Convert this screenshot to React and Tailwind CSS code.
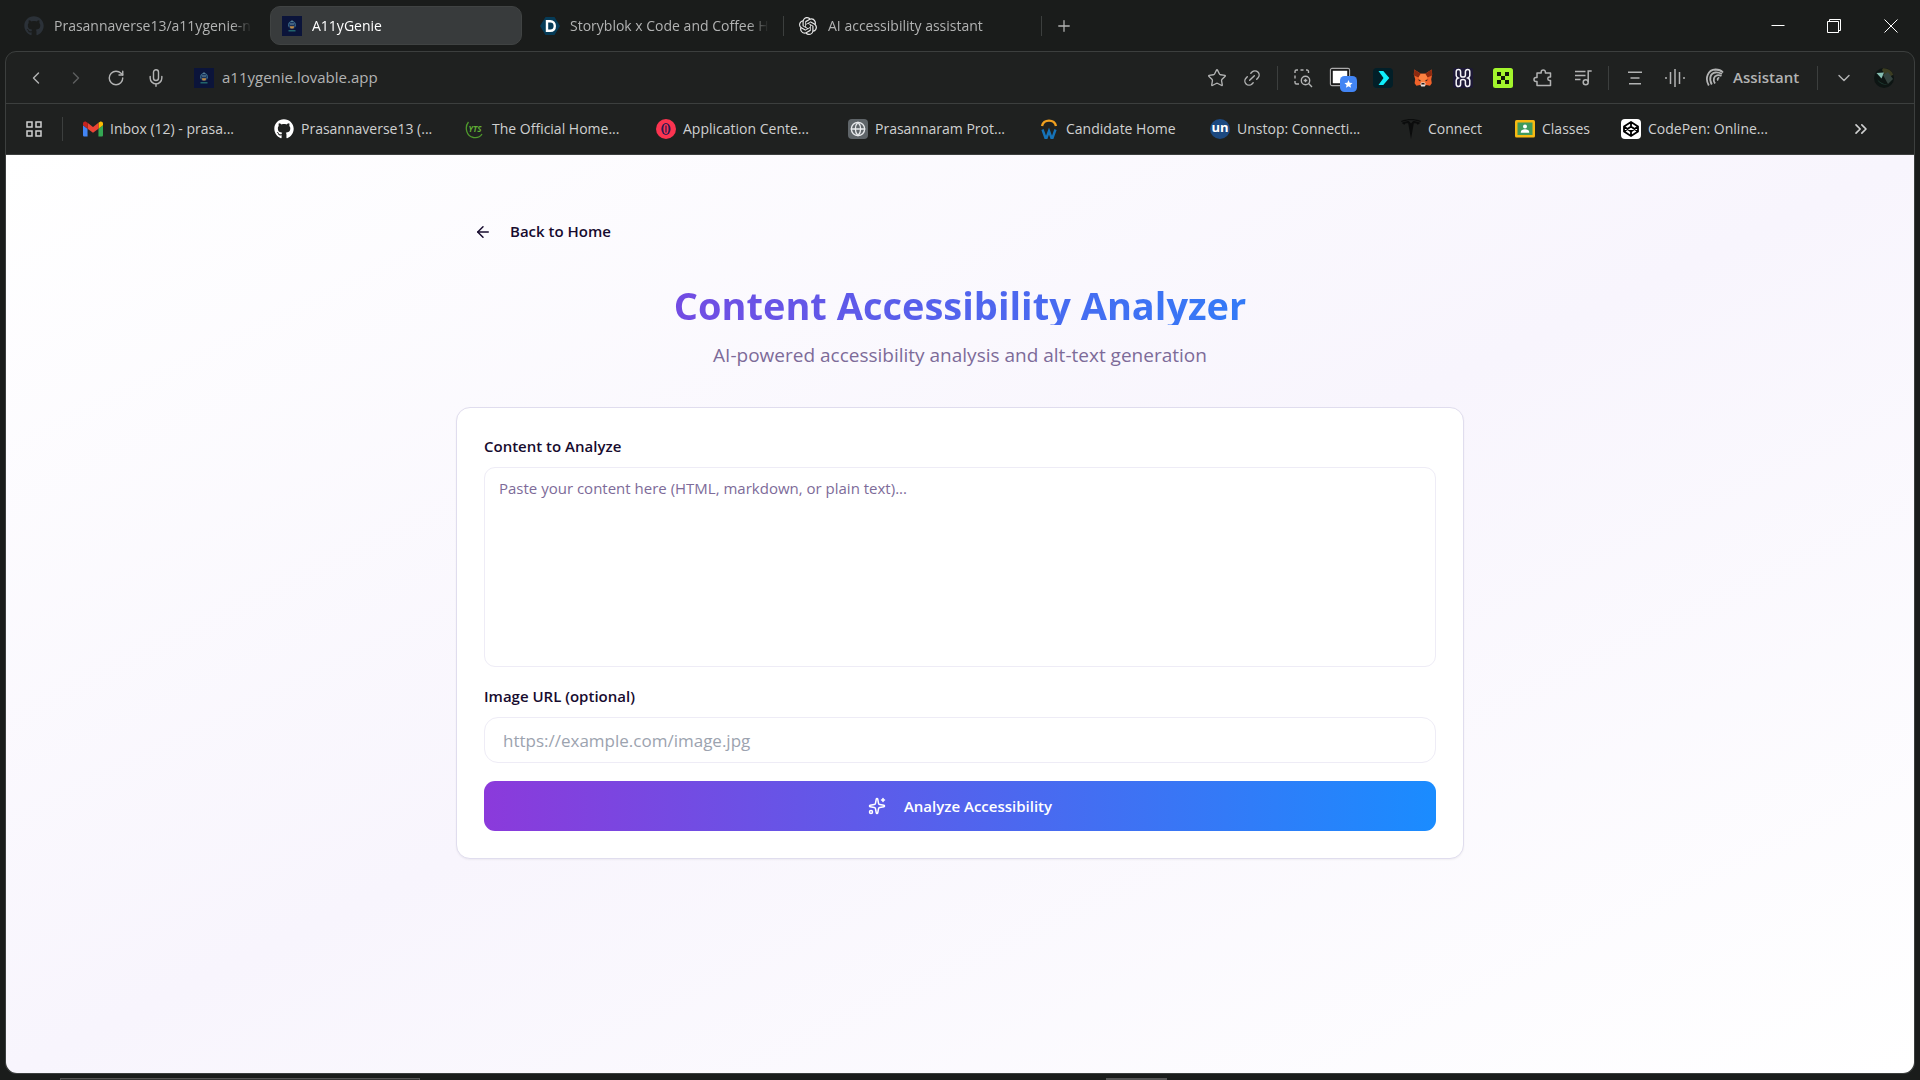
import React from 'react'
import { ArrowLeft, ChevronDown, ChevronLeft, ChevronRight, ChevronsRight, Globe, Link2, Mic, Plus, RotateCw, Sparkles, Star } from 'lucide-react'
import { FaGithub } from 'react-icons/fa'
import { SiCodepen, SiOpenai, SiTesla } from 'react-icons/si'

/* ---------- favicons ---------- */

const GenieIcon = () => (
    <svg viewBox="0 0 20 20" className="size-5">
        <rect width="20" height="20" fill="#0b143a" />
        <circle cx="10" cy="9" r="4" fill="#16305c" />
        <path d="M6.8 10.500c-.7-3 1-5.200 3.200-5.200s3.900 2.200 3.200 5.200" fill="none" stroke="#41738f" strokeWidth="1" />
        <path d="M8 8h4M10 4.300v1.600" stroke="#6b8ea0" strokeWidth="1" />
        <path d="M7.600 10.300h4.800l-1 2.100H8.600z" fill="#c08b45" />
        <path d="M6.500 14.800h7" stroke="#27797a" strokeWidth="1.200" />
    </svg>
)

const StoryIcon = () => (
    <svg viewBox="0 0 20 20" className="size-5">
        <path d="M5.500 1h9L20 10l-5.500 9h-9L0 10z" fill="#063b57" />
        <path d="M7 5.200h3.200c3 0 4.600 1.900 4.600 4.800s-1.600 4.800-4.600 4.800H7z" fill="none" stroke="#fff" strokeWidth="2.400" />
    </svg>
)

const GmailIcon = () => (
    <svg viewBox="52 42 88 66" className="w-5 h-4">
        <path fill="#4285f4" d="M58 108h14V74L52 59v43c0 3.320 2.690 6 6 6" />
        <path fill="#34a853" d="M120 108h14c3.320 0 6-2.690 6-6V59l-20 15" />
        <path fill="#fbbc04" d="M120 48v26l20-15v-8c0-7.420-8.470-11.650-14.400-7.200" />
        <path fill="#ea4335" d="M72 74V48l24 18 24-18v26L96 92" />
        <path fill="#c5221f" d="M52 51v8l20 15V48l-5.600-4.200c-5.940-4.450-14.400-.220-14.400 7.200" />
    </svg>
)

const YtsIcon = () => (
    <span className="relative flex size-5 items-center justify-center">
        <svg viewBox="0 0 20 20" className="absolute inset-0 size-5" fill="none" stroke="#4f9a2c">
            <path d="M3.500 3C-.5 8 1 17 8.500 18.500c4 .6 7-1 8.500-3.500" strokeWidth="1.300" />
        </svg>
        <span className="text-[8px] leading-none font-bold italic text-[#5fae35]">YTS</span>
    </span>
)

const OperaIcon = () => (
    <svg viewBox="0 0 20 20" className="size-5">
        <circle cx="10" cy="10" r="10" fill="#fb3450" />
        <ellipse cx="10" cy="10" rx="4.600" ry="6" fill="#2b1a52" />
        <ellipse cx="10" cy="10" rx="2.600" ry="5" fill="#fb3450" />
        <path d="M10 6.500v7" stroke="#2b1a52" strokeWidth="1.200" />
    </svg>
)

const SiteIcon = () => (
    <span className="flex size-5 items-center justify-center rounded bg-[#5f6569]">
        <Globe className="size-4 text-[#e8eaec]" strokeWidth={2} />
    </span>
)

const CandidateIcon = () => (
    <svg viewBox="0 0 20 20" className="size-5" fill="none">
        <path d="M3 7C4 3 7 1.600 10 1.600S16 3 17 7" stroke="#f0a01f" strokeWidth="2.400" />
        <path d="M3.500 10.500L6.500 19h1L10 12l2.500 7h1l3-8.500" stroke="#1673b8" strokeWidth="2.400" />
    </svg>
)

const UnstopIcon = () => (
    <span className="flex size-5 items-center justify-center rounded-full bg-[#1c4980] pb-1 text-[13px] leading-none font-bold text-white">un</span>
)

const ClassesIcon = () => (
    <svg viewBox="0 0 20 20" className="size-5">
        <rect y="1" width="20" height="17.500" rx="1.500" fill="#f6b912" />
        <rect x="2.500" y="3.500" width="15" height="12.500" fill="#3f9a5c" />
        <circle cx="10" cy="7.500" r="2" fill="#fff" />
        <path d="M5.800 13c0-2 2-2.800 4.200-2.800s4.200.8 4.200 2.800v.8H5.800z" fill="#fff" />
    </svg>
)

const CodepenIcon = () => (
    <span className="flex size-5 items-center justify-center rounded-sm bg-white">
        <svg viewBox="0 0 20 20" className="size-5" fill="none" stroke="#000" strokeWidth="1.800" strokeLinejoin="round">
            <path d="M10 3l7 4.500v5L10 17l-7-4.500v-5zM10 3v4.500M10 12.500V17M3 7.500l7 5 7-5M3 12.500l7-5 7 5" />
        </svg>
    </span>
)

/* ---------- extension icons ---------- */

const LensIcon = () => (
    <svg viewBox="0 0 20 20" className="size-5" fill="none" stroke="currentColor" strokeWidth="1.400">
        <path d="M2 5V3.500A1.500 1.500 0 0 1 3.500 2H5M7.500 2h3M13 2h1a1.500 1.500 0 0 1 1.500 1.500V5M2 7.500v3M2 13v1.500A1.500 1.500 0 0 0 3.500 16H6" />
        <circle cx="12.500" cy="12.500" r="4.200" />
        <path d="M15.600 15.600L19 19M10.700 12.500h3.600M12.500 10.700v3.600" />
    </svg>
)

const ScreenIcon = () => (
    <svg viewBox="0 0 28 28" className="size-7">
        <rect x="1.500" y="4.500" width="19" height="17" rx="1.500" fill="none" stroke="#aaa" strokeWidth="1.300" />
        <rect x="3" y="6" width="16" height="14" fill="#fff" stroke="#111" strokeWidth="1.500" />
        <rect x="11" y="12" width="17" height="16" rx="4.500" fill="#4285f4" />
        <path d="M19.500 16l1.200 2.700 2.900.3-2.200 1.900.7 2.900-2.600-1.500-2.600 1.500.7-2.900-2.200-1.900 2.900-.3z" fill="#fff" />
    </svg>
)

const ArrowExtIcon = () => (
    <svg viewBox="0 0 20 20" className="size-5">
        <rect width="20" height="20" rx="4" fill="#021f28" />
        <path d="M5.500 3h4.800l6 7-6 7H5.500l5-7z" fill="#0ff0fc" />
    </svg>
)

const FoxIcon = () => (
    <svg viewBox="0 0 20 20" className="size-5">
        <path d="M1.200 1.500l6.600 4.300h4.400l6.600-4.300.4 5-1 4.700.6 4-1.800 2.600-3.600-.8-1.500 1H8.500L7 17l-3.600.8-1.800-2.600.6-4-1.400-4.700z" fill="#f0622a" />
        <path d="M1.200 1.500l6.600 4.300-2.300 3.600L1 7.500zM18.800 1.500l-6.600 4.300 2.300 3.600L19 7.500z" fill="#8c2a10" />
        <path d="M5.500 9.400l2.300-3.600h4.400l2.300 3.600-2.500 5.600H8z" fill="#fb8140" />
        <path d="M4.600 11.500l3 .4-.4 1.600zM15.400 11.500l-3 .4.400 1.600z" fill="#33201a" />
        <path d="M7.400 15.600l1-1h3.200l1 1-.8 3H8.200z" fill="#e6e2e0" />
        <path d="M8.600 15h2.800l.3 1.400H8.300z" fill="#2a1c18" />
    </svg>
)

const KnotIcon = () => (
    <svg viewBox="0 0 20 20" className="size-5">
        <rect width="20" height="20" rx="2" fill="#1d1936" />
        <path d="M3.200 3.700a2.200 2.200 0 0 1 4.400 0v3.500c0 1.200.8 1.800 2.400 1.800s2.400-.6 2.400-1.800V3.700a2.200 2.200 0 0 1 4.400 0v3.800c0 1.300-.9 2-2 2.500 1.100.5 2 1.200 2 2.500v3.800a2.200 2.200 0 0 1-4.400 0v-3c0-1.200-.8-1.800-2.400-1.800s-2.400.6-2.400 1.800v3a2.200 2.200 0 0 1-4.400 0v-3.800c0-1.300.9-2 2-2.500-1.100-.5-2-1.200-2-2.500z" fill="none" stroke="#f5f5f7" strokeWidth="1.500" />
    </svg>
)

const DiceIcon = () => (
    <svg viewBox="0 0 20 20" className="size-5">
        <rect width="20" height="20" rx="2.500" fill="#a3f52c" />
        <path d="M4 4h4v4H4zM12 4h4v4h-4zM8 8h4v4H8zM4 12h4v4H4zM12 12h4v4h-4z" fill="#10180a" />
    </svg>
)

const PuzzleIcon = () => (
    <svg viewBox="0 0 20 20" className="size-5" fill="none" stroke="currentColor" strokeWidth="1.500" strokeLinejoin="round">
        <path d="M4 5h4.200V4a2.100 2.100 0 0 1 4.200 0v1h5.100v4h-1a1.700 1.700 0 0 0 0 3.400h1V17.500H4v-4H3a2 2 0 0 1 0-4h1z" />
    </svg>
)

const MusicIcon = () => (
    <svg viewBox="0 0 20 20" className="size-5" fill="none" stroke="currentColor" strokeWidth="1.500">
        <path d="M2 3.500h10.500M2 7.500h10.500M2 11.500h5.500M15.200 14V3h3.500" />
        <circle cx="12.700" cy="14.200" r="2.500" />
    </svg>
)

const LinesIcon = () => (
    <svg viewBox="0 0 20 20" className="size-5" fill="none" stroke="currentColor" strokeWidth="1.600">
        <path d="M3 4.200h14M5.500 10h9M4 15.800h12" />
    </svg>
)

const WaveIcon = () => (
    <svg viewBox="0 0 20 20" className="size-5" fill="none" stroke="currentColor" strokeWidth="1.500">
        <path d="M1 9v2M5.500 4v12M10 1v18M14.500 4v12M19 9v2" />
    </svg>
)

const AssistantIcon = () => (
    <svg viewBox="0 0 20 20" className="size-5" fill="none" stroke="currentColor" strokeWidth="1.800">
        <path d="M3.800 17.500C-.5 10 3 1.800 10.500 1.500c3 0 5.500.8 7.500 3" />
        <path d="M6.800 16.500C3.500 11 5.500 5 10.500 4.500c2.500-.2 4.500.5 6.500 1.500" />
        <path d="M10 15.500c-2.500-4-1-7.500 2-8.200 1.500-.3 3-.1 4.500.7" />
        <path d="M13 12.500c-.8-1.300-.3-2.500 1.300-3" />
    </svg>
)

const AvatarIcon = () => (
    <svg viewBox="0 0 20 20" className="size-5">
        <circle cx="10" cy="10" r="10" fill="#0d1513" />
        <path d="M9 .2a10 10 0 0 1 10.300 6.500L13 10 8 2z" fill="#3c3d22" />
        <path d="M9 7l5-3 5 7-5 5z" fill="#34433f" />
        <path d="M3 11c3 4 8 6 12 5a9 9 0 0 1-12-5z" fill="#1e3a31" />
        <path d="M2.500 5l7.500-.5-2.500 6z" fill="#86bdb0" />
    </svg>
)

const GridIcon = () => (
    <svg viewBox="0 0 16 16" className="size-4" fill="none" stroke="currentColor" strokeWidth="1.500">
        <path d="M1 1h5v5H1zM10 1h5v5h-5zM1 10h5v5H1zM10 10h5v5h-5z" />
    </svg>
)

/* ---------- data ---------- */

const tabs = [
    { title: 'Prasannaverse13/a11ygenie-n', icon: <FaGithub className="size-5 text-[#2b3138]" /> },
    { title: 'A11yGenie', icon: <GenieIcon />, active: true },
    { title: 'Storyblok x Code and Coffee H', icon: <StoryIcon />, divider: true },
    { title: 'AI accessibility assistant', icon: <SiOpenai className="size-[18px] text-[#e6e6e6]" />, divider: true },
]

const bookmarks = [
    { name: 'Inbox (12) - prasa...', icon: <GmailIcon />, width: 'w-[191px]' },
    { name: 'Prasannaverse13 (...', icon: <FaGithub className="size-5 text-white" />, width: 'w-[191px]' },
    { name: 'The Official Home...', icon: <YtsIcon />, width: 'w-[191px]' },
    { name: 'Application Cente...', icon: <OperaIcon />, width: 'w-[192px]' },
    { name: 'Prasannaram Prot...', icon: <SiteIcon />, width: 'w-[191px]' },
    { name: 'Candidate Home', icon: <CandidateIcon />, width: 'w-[171px]' },
    { name: 'Unstop: Connecti...', icon: <UnstopIcon />, width: 'w-[191px]' },
    { name: 'Connect', icon: <SiTesla className="size-5 text-[#0b0c0c]" />, width: 'w-[114px]' },
    { name: 'Classes', icon: <ClassesIcon />, width: 'w-[106px]' },
    { name: 'CodePen: Online...', icon: <CodepenIcon />, width: 'w-[191px]' },
]

const extensions = [
    { name: 'Search image', icon: <LensIcon /> },
    { name: 'Screen capture', icon: <ScreenIcon /> },
    { name: 'Arrow', icon: <ArrowExtIcon /> },
    { name: 'Wallet', icon: <FoxIcon /> },
    { name: 'Knot', icon: <KnotIcon /> },
    { name: 'Dice', icon: <DiceIcon /> },
    { name: 'Extensions', icon: <PuzzleIcon /> },
    { name: 'Media', icon: <MusicIcon /> },
]

/* ---------- browser chrome ---------- */

const IconButton = ({ label, children }) => (
    <button type="button" aria-label={label} className="flex size-10 shrink-0 items-center justify-center">
        {children}
    </button>
)

const Divider = () => <span className="h-6 w-px shrink-0 bg-[#3c3f3e]"></span>

const TabStrip = () => (
    <div className="flex h-[51px] items-center justify-between pl-3 text-sm">
        <div className="flex items-center">
            {tabs.map((tab) => (
                <div key={tab.title} className="flex items-center">
                    <button
                        type="button"
                        className={tab.active
                            ? 'flex h-[39px] w-[252px] items-center gap-[10px] rounded-[10px] border border-[#404343] bg-[#383b3c] px-[11px] text-white'
                            : 'flex h-[39px] w-[252px] items-center gap-[10px] px-3 text-[#b2b3b3]'}
                    >
                        <span className="flex size-5 shrink-0 items-center justify-center">{tab.icon}</span>
                        <span className="flex-1 whitespace-nowrap text-left mask-r-from-90%">{tab.title}</span>
                    </button>
                    <span className="flex w-[6px] justify-center">{tab.divider && <span className="h-5 w-px bg-[#3c3f3e]"></span>}</span>
                </div>
            ))}
            <IconButton label="New tab"><Plus className="size-[18px] text-[#b2b3b3]" strokeWidth={1.7} /></IconButton>
        </div>
        <div className="flex items-center text-white">
            <button type="button" aria-label="Minimize" className="flex h-[51px] w-14 items-center justify-center">
                <svg viewBox="0 0 14 14" className="size-[14px]" fill="none" stroke="currentColor"><path d="M.5 6.500h13" /></svg>
            </button>
            <button type="button" aria-label="Restore" className="flex h-[51px] w-14 items-center justify-center">
                <svg viewBox="0 0 14 14" className="size-[14px]" fill="none" stroke="currentColor"><path d="M.5 2.500h11v11H.5zM2.500 2.500v-2h11v11h-2" /></svg>
            </button>
            <button type="button" aria-label="Close" className="flex h-[51px] w-[58px] items-center justify-center">
                <svg viewBox="0 0 14 14" className="size-[14px]" fill="none" stroke="currentColor"><path d="M.5.5l13 13M13.500.5l-13 13" /></svg>
            </button>
        </div>
    </div>
)

const AddressBar = () => (
    <div className="flex h-[52px] items-center justify-between border-b border-[#3c3f3e] pl-[10px] pr-[10px] text-[#b2b3b3]">
        <div className="flex items-center">
            <IconButton label="Back"><ChevronLeft className="size-5" strokeWidth={1.7} /></IconButton>
            <IconButton label="Forward"><ChevronRight className="size-5 text-[#5c5e5e]" strokeWidth={1.7} /></IconButton>
            <IconButton label="Reload"><RotateCw className="size-[18px]" strokeWidth={1.9} /></IconButton>
            <IconButton label="Voice"><Mic className="size-5" strokeWidth={1.7} /></IconButton>
            <div className="flex items-center gap-2 pl-[18px]">
                <GenieIcon />
                <span>a11ygenie.lovable.app</span>
            </div>
        </div>
        <div className="flex items-center">
            <div className="flex w-[70px] items-center justify-around">
                <button type="button" aria-label="Bookmark"><Star className="size-5" strokeWidth={1.600} /></button>
                <button type="button" aria-label="Copy link"><Link2 className="size-5 -rotate-45" strokeWidth={1.700} /></button>
            </div>
            <span className="pl-2"></span>
            <Divider />
            <span className="pl-[5px]"></span>
            {extensions.map((ext) => <IconButton key={ext.name} label={ext.name}>{ext.icon}</IconButton>)}
            <span className="pl-[5px]"></span>
            <Divider />
            <span className="pl-[6px]"></span>
            <IconButton label="Reader"><LinesIcon /></IconButton>
            <IconButton label="Listen"><WaveIcon /></IconButton>
            <button type="button" className="flex h-10 w-[122px] items-center gap-2 pl-[10px] font-semibold">
                <AssistantIcon />
                Assistant
            </button>
            <Divider />
            <span className="pl-[6px]"></span>
            <IconButton label="More"><ChevronDown className="size-5" strokeWidth={1.700} /></IconButton>
            <IconButton label="Profile"><AvatarIcon /></IconButton>
        </div>
    </div>
)

const BookmarksBar = () => (
    <nav className="flex h-[51px] items-center justify-between border-b border-[#3c3f3e] pl-5 pr-[33px] text-sm text-[#cfd0d0]">
        <div className="flex items-center">
            <button type="button" aria-label="All bookmarks" className="mr-5"><GridIcon /></button>
            <Divider />
            <span className="pl-5"></span>
            {bookmarks.map(({ name, icon, width }) => (
                <a key={name} href="#" className={`${width} flex items-center gap-[7px] whitespace-nowrap`}>
                    {icon}
                    <span>{name}</span>
                </a>
            ))}
        </div>
        <button type="button" aria-label="More bookmarks" className="flex w-10 justify-center"><ChevronsRight className="size-5" strokeWidth={2} /></button>
    </nav>
)

/* ---------- page ---------- */

const Analyzer = () => (
    <main className="flex-1 rounded-b-[11px] bg-linear-to-br/srgb from-white via-[#f8f5fd] to-white px-9 py-[54px] text-[#170b2e]">
        <div className="mx-auto max-w-[1008px]">
            <a href="#" className="inline-flex h-[45px] items-center gap-[18px] px-[18px] font-semibold">
                <ArrowLeft className="size-[18px]" />
                Back to Home
            </a>

            <div className="mt-[26px] mb-9 text-center">
                <h1 className="mb-[14px] h-[45px] bg-linear-to-r/srgb from-[#8b3adb] to-[#1a8cff] bg-clip-text pt-[3px] text-[38px] leading-[45px] font-bold text-transparent">
                    Content Accessibility Analyzer
                </h1>
                <p className="text-[19px] leading-8 text-[#7d6b99]">AI-powered accessibility analysis and alt-text generation</p>
            </div>

            <form className="flex flex-col rounded-[14px] border border-[#e0ddee] bg-white p-[27px] shadow-xs" onSubmit={(e) => e.preventDefault()}>
                <label htmlFor="content" className="mb-[9px] leading-[23px] font-semibold">Content to Analyze</label>
                <textarea
                    id="content"
                    placeholder="Paste your content here (HTML, markdown, or plain text)..."
                    className="mb-[18px] h-[200px] resize-none rounded-[11px] border border-[#eeecf6] bg-white px-[14px] py-[9px] leading-[23px] outline-none placeholder:text-[#7d6b99]"
                />
                <label htmlFor="image" className="mb-[9px] leading-[23px] font-semibold">Image URL (optional)</label>
                <input
                    id="image"
                    type="url"
                    placeholder="https://example.com/image.jpg"
                    className="mb-[18px] h-[46px] rounded-[14px] border border-[#eeecf6] bg-white px-[18px] text-[17px] outline-none placeholder:text-[#9ca3af]"
                />
                <button type="submit" className="flex h-[50px] items-center justify-center gap-[18px] rounded-[11px] bg-linear-to-r/srgb from-[#8b3adb] to-[#1a8cff] font-semibold text-white">
                    <Sparkles className="size-[18px]" />
                    Analyze Accessibility
                </button>
            </form>
        </div>
    </main>
)

const App = () => {
    return (
        <div className="flex min-h-screen flex-col bg-[#1a1c1b] font-['Open_Sans','Noto_Sans',sans-serif] text-[15px]">
            <TabStrip />
            <div className="mx-[5px] flex flex-1 flex-col rounded-t-[11px] rounded-b-[11px] border border-[#3c3f3e] bg-[#1f2120]">
                <AddressBar />
                <BookmarksBar />
                <Analyzer />
            </div>

            {/* top edge of the taskbar */}
            <div className="flex h-[6px] items-end">
                <span className="ml-[60px] h-[2px] w-[360px] border border-b-0 border-[#555] bg-[#333]"></span>
                <span className="ml-[686px] h-[2px] w-[61px] bg-[#555]"></span>
            </div>
        </div>
    )
}

export default App
